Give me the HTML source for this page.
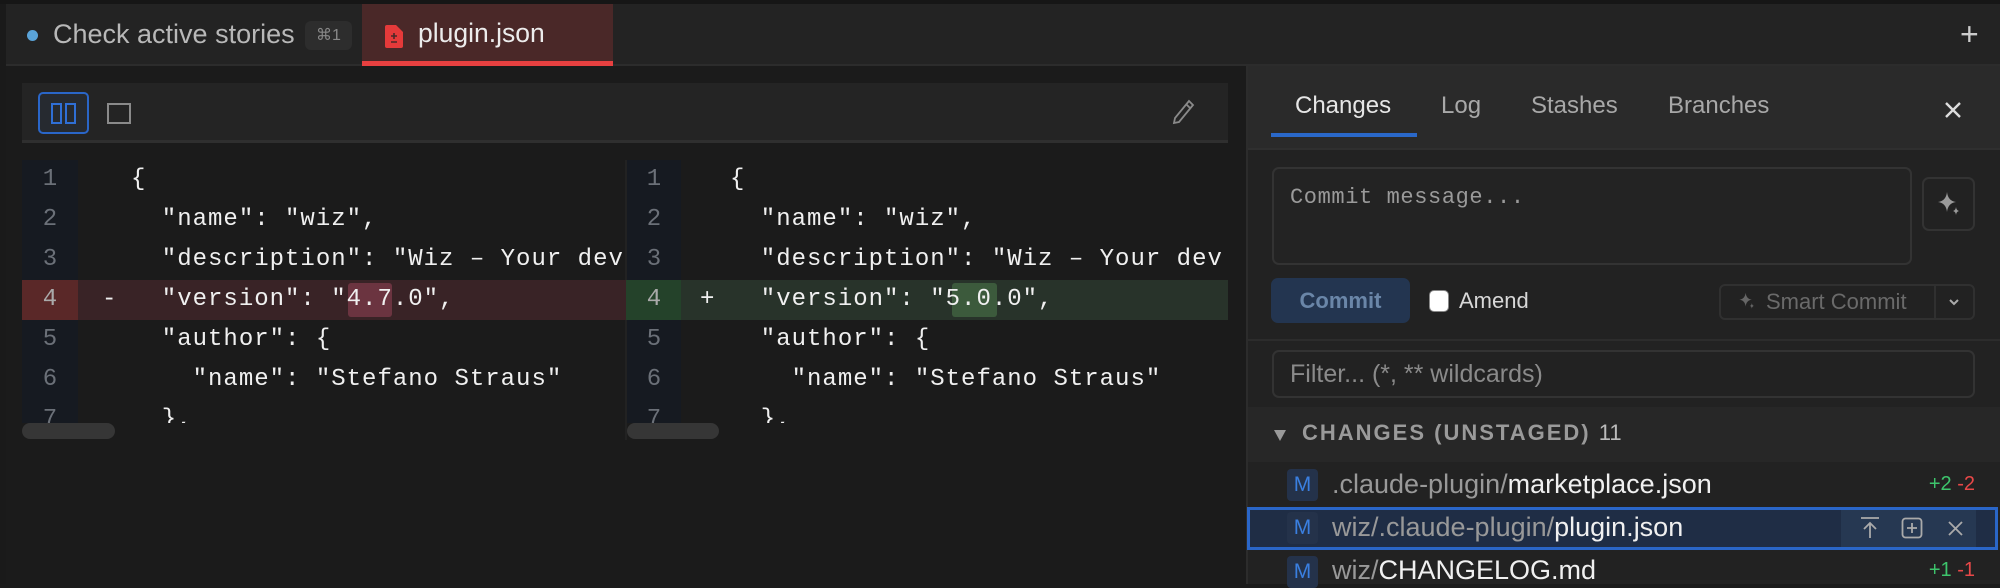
<!DOCTYPE html>
<html><head><meta charset="utf-8">
<style>
*{margin:0;padding:0;box-sizing:border-box}
body{width:2000px;height:584px;overflow:hidden;background:#1b1b1b;font-family:"Liberation Sans",sans-serif;position:relative}
.a{position:absolute}
.mono{font-family:"Liberation Mono",monospace;font-size:24px;letter-spacing:1.0px;white-space:pre;color:#f0f0f0}
.ln{color:#6b7078;font-family:"Liberation Mono",monospace;font-size:24px;width:56px;text-align:center}
.sans{font-family:"Liberation Sans",sans-serif;white-space:nowrap}
</style></head><body>
<!-- tab bar -->
<div class="a" style="left:0;top:0;width:2000px;height:66px;background:#232323;border-top:4px solid #161616;border-bottom:2px solid #2c2c2c"></div>
<div class="a" style="left:0;top:4px;width:6px;height:580px;background:#1a1a1a"></div>
<div class="a" style="left:27px;top:30px;width:11px;height:11px;border-radius:50%;background:#5aa3d8"></div>
<div class="a sans" style="left:53px;top:19px;font-size:27px;color:#b8b8b8">Check active stories</div>
<div class="a sans" style="left:305px;top:21px;width:47px;height:29px;border-radius:6px;background:#2d2d2d;color:#888;font-size:16px;line-height:29px;text-align:center">⌘1</div>
<div class="a" style="left:362px;top:4px;width:251px;height:62px;background:#4a2828;border-bottom:5px solid #e84040"></div>
<svg class="a" style="left:384px;top:25px" width="20" height="23" viewBox="0 0 20 23"><path d="M1 2a2 2 0 0 1 2-2h9l7 7v14a2 2 0 0 1-2 2H3a2 2 0 0 1-2-2z" fill="#e53a3a"/><path d="M7 11h6M10 8v6M7 17h6" stroke="#4a2828" stroke-width="1.6"/></svg>
<div class="a sans" style="left:418px;top:18px;font-size:26.5px;color:#ececec">plugin.json</div>
<div class="a sans" style="left:1960px;top:16px;font-size:32px;color:#ccc">+</div>

<!-- editor -->
<div class="a" style="left:6px;top:66px;width:1240px;height:518px;background:#1b1b1b"></div>
<div class="a" style="left:22px;top:83px;width:1206px;height:60px;background:#242424;border-bottom:3px solid #2f2f2f"></div>
<div class="a" style="left:38px;top:92px;width:51px;height:42px;border:2px solid #2a66c8;border-radius:5px;background:#262a30"></div>
<div class="a" style="left:51px;top:103px;width:11px;height:21px;border:2px solid #2f6fd6"></div>
<div class="a" style="left:65px;top:103px;width:11px;height:21px;border:2px solid #2f6fd6"></div>
<div class="a" style="left:107px;top:103px;width:24px;height:21px;border:2px solid #8a8a8a"></div>
<svg class="a" style="left:1172px;top:99px" width="24" height="26" viewBox="0 0 24 26"><path d="M17 2l4 4L7 23l-5 1 1-5z M14 5l4 4" fill="none" stroke="#8a8a8a" stroke-width="1.8"/></svg>

<!-- gutters -->
<div class="a" style="left:22px;top:160px;width:56px;height:263px;background:#161a21"></div>
<div class="a" style="left:626px;top:160px;width:55px;height:263px;background:#161a21"></div>
<div class="a" style="left:625px;top:160px;width:2px;height:280px;background:#222"></div>
<!-- line 4 bands -->
<div class="a" style="left:22px;top:280px;width:56px;height:40px;background:#5a2828"></div>
<div class="a" style="left:78px;top:280px;width:548px;height:40px;background:#392326"></div>
<div class="a" style="left:626px;top:280px;width:55px;height:40px;background:#24422a"></div>
<div class="a" style="left:681px;top:280px;width:547px;height:40px;background:#28332a"></div>
<div class="a" style="left:348px;top:283px;width:44px;height:34px;background:#6b3440;border-radius:3px"></div>
<div class="a" style="left:952px;top:283px;width:45px;height:34px;background:#3c5a3c;border-radius:3px"></div>

<div class="a" style="left:22px;top:160px;width:604px;height:263px;overflow:hidden">
 <div class="a" style="left:0;top:0">
  <div class="ln" style="height:40px;line-height:40px">1</div><div class="ln" style="height:40px;line-height:40px">2</div><div class="ln" style="height:40px;line-height:40px">3</div><div class="ln" style="height:40px;line-height:40px;color:#aaa">4</div><div class="ln" style="height:40px;line-height:40px">5</div><div class="ln" style="height:40px;line-height:40px">6</div><div class="ln" style="height:40px;line-height:40px">7</div>
 </div>
 <div class="a mono" style="left:80px;top:120px;line-height:40px">-</div>
 <div class="a mono" style="left:109px;top:0;line-height:40px">{
  "name": "wiz",
  "description": "Wiz – Your dev
  "version": "4.7.0",
  "author": {
    "name": "Stefano Straus"
  },</div>
</div>
<div class="a" style="left:626px;top:160px;width:602px;height:263px;overflow:hidden">
 <div class="a" style="left:0;top:0">
  <div class="ln" style="height:40px;line-height:40px">1</div><div class="ln" style="height:40px;line-height:40px">2</div><div class="ln" style="height:40px;line-height:40px">3</div><div class="ln" style="height:40px;line-height:40px;color:#aaa">4</div><div class="ln" style="height:40px;line-height:40px">5</div><div class="ln" style="height:40px;line-height:40px">6</div><div class="ln" style="height:40px;line-height:40px">7</div>
 </div>
 <div class="a mono" style="left:74px;top:120px;line-height:40px">+</div>
 <div class="a mono" style="left:104px;top:0;line-height:40px">{
  "name": "wiz",
  "description": "Wiz – Your dev
  "version": "5.0.0",
  "author": {
    "name": "Stefano Straus"
  },</div>
</div>
<div class="a" style="left:22px;top:423px;width:93px;height:16px;border-radius:8px;background:#363636"></div>
<div class="a" style="left:627px;top:423px;width:92px;height:16px;border-radius:8px;background:#363636"></div>

<!-- right panel -->
<div class="a" style="left:1246px;top:66px;width:754px;height:518px;background:#222;border-left:2px solid #2c2c2c"></div>
<div class="a" style="left:1248px;top:66px;width:752px;height:84px;background:#2a2a2a;border-bottom:2px solid #2f2f2f"></div>
<div class="a sans" style="left:1295px;top:92px;font-size:24px;color:#e6e6e6">Changes</div>
<div class="a sans" style="left:1441px;top:92px;font-size:24px;color:#a8a8a8">Log</div>
<div class="a sans" style="left:1531px;top:92px;font-size:24px;color:#a8a8a8">Stashes</div>
<div class="a sans" style="left:1668px;top:92px;font-size:24px;color:#a8a8a8">Branches</div>
<div class="a" style="left:1271px;top:133px;width:146px;height:4px;background:#2a68c9"></div>
<svg class="a" style="left:1944px;top:101px" width="18" height="18" viewBox="0 0 18 18"><path d="M2 2l14 14M16 2L2 16" stroke="#ddd" stroke-width="2.4"/></svg>

<div class="a" style="left:1272px;top:167px;width:640px;height:98px;border:2px solid #333;border-radius:7px;background:#232323"></div>
<div class="a" style="left:1290px;top:185px;font-family:'Liberation Mono',monospace;font-size:22px;letter-spacing:0.6px;color:#9a9a9a;white-space:pre">Commit message...</div>
<div class="a" style="left:1922px;top:177px;width:53px;height:54px;border:2px solid #333;border-radius:7px"></div>
<svg class="a" style="left:1936px;top:190px" width="26" height="28" viewBox="0 0 26 28"><path d="M11 2q1 9 9 10q-8 1-9 10q-1-9-9-10q8-1 9-10z" fill="#9a9a9a"/><path d="M20 17q.4 3.4 3 4q-2.6.6-3 4q-.4-3.4-3-4q2.6-.6 3-4z" fill="#9a9a9a"/></svg>

<div class="a sans" style="left:1271px;top:278px;width:139px;height:45px;border-radius:7px;background:#233550;color:#6a86a8;font-size:22px;font-weight:bold;line-height:45px;text-align:center">Commit</div>
<div class="a" style="left:1429px;top:290px;width:20px;height:22px;border-radius:5px;background:#fff;border:1px solid #888"></div>
<div class="a sans" style="left:1459px;top:288px;font-size:22px;color:#d8d8d8">Amend</div>
<div class="a" style="left:1719px;top:284px;width:256px;height:36px;border:2px solid #303030;border-radius:6px"></div>
<div class="a" style="left:1934px;top:286px;width:2px;height:32px;background:#303030"></div>
<svg class="a" style="left:1738px;top:290px" width="18" height="22" viewBox="0 0 26 28"><path d="M11 2q1 9 9 10q-8 1-9 10q-1-9-9-10q8-1 9-10z" fill="#666"/><path d="M20 17q.4 3.4 3 4q-2.6.6-3 4q-.4-3.4-3-4q2.6-.6 3-4z" fill="#666"/></svg>
<div class="a sans" style="left:1766px;top:289px;font-size:22px;color:#6a6a6a">Smart Commit</div>
<svg class="a" style="left:1948px;top:297px" width="12" height="10" viewBox="0 0 12 10"><path d="M2 3l4 4 4-4" fill="none" stroke="#aaa" stroke-width="2"/></svg>

<div class="a" style="left:1248px;top:339px;width:752px;height:2px;background:#2c2c2c"></div>
<div class="a" style="left:1272px;top:350px;width:703px;height:48px;border:2px solid #333;border-radius:7px"></div>
<div class="a sans" style="left:1290px;top:360px;font-size:25px;color:#8a8a8a">Filter... (*, ** wildcards)</div>

<div class="a" style="left:1248px;top:407px;width:752px;height:55px;background:#272727"></div>
<svg class="a" style="left:1273px;top:428px" width="14" height="14" viewBox="0 0 14 14"><path d="M1 2h12L7 13z" fill="#999"/></svg>
<div class="a sans" style="left:1302px;top:420px;font-size:22px;font-weight:bold;color:#9a9a9a;letter-spacing:2px">CHANGES (UNSTAGED) <span style="font-weight:normal;color:#bbb;letter-spacing:0">11</span></div>

<!-- rows -->
<div class="a sans" style="left:1287px;top:469px;width:31px;height:32px;border-radius:4px;background:#24324a;color:#3a7fe0;font-size:21px;line-height:32px;text-align:center">M</div>
<div class="a sans" style="left:1332px;top:469px;font-size:27px;color:#999">.claude-plugin/<span style="color:#f0f0f0">marketplace.json</span></div>
<div class="a sans" style="right:25px;top:473px;font-size:20px"><span style="color:#3dc46c">+2</span> <span style="color:#e84848">-2</span></div>

<div class="a" style="left:1247px;top:507px;width:751px;height:43px;border:3px solid #2a66c8;background:#1f2d45"></div>
<div class="a" style="left:1841px;top:510px;width:135px;height:37px;background:#263852"></div>
<div class="a sans" style="left:1287px;top:512px;width:31px;height:32px;border-radius:4px;background:#24324a;color:#3a7fe0;font-size:21px;line-height:32px;text-align:center">M</div>
<div class="a sans" style="left:1332px;top:512px;font-size:27px;color:#999">wiz/.claude-plugin/<span style="color:#f0f0f0">plugin.json</span></div>
<svg class="a" style="left:1858px;top:516px" width="24" height="24" viewBox="0 0 24 24"><path d="M3 2h18M12 22V7M6 13l6-6 6 6" fill="none" stroke="#aaa" stroke-width="1.8"/></svg>
<svg class="a" style="left:1901px;top:517px" width="22" height="22" viewBox="0 0 22 22"><rect x="1.5" y="1.5" width="19" height="19" rx="3" fill="none" stroke="#aaa" stroke-width="1.8"/><path d="M11 6v10M6 11h10" stroke="#aaa" stroke-width="1.8"/></svg>
<svg class="a" style="left:1948px;top:521px" width="15" height="15" viewBox="0 0 15 15"><path d="M1 1l13 13M14 1L1 14" stroke="#aaa" stroke-width="1.8"/></svg>

<div class="a sans" style="left:1287px;top:556px;width:31px;height:32px;border-radius:4px;background:#24324a;color:#3a7fe0;font-size:21px;line-height:32px;text-align:center">M</div>
<div class="a sans" style="left:1332px;top:555px;font-size:27px;color:#999">wiz/<span style="color:#f0f0f0">CHANGELOG.md</span></div>
<div class="a sans" style="right:25px;top:559px;font-size:20px"><span style="color:#3dc46c">+1</span> <span style="color:#e84848">-1</span></div>
</body></html>
